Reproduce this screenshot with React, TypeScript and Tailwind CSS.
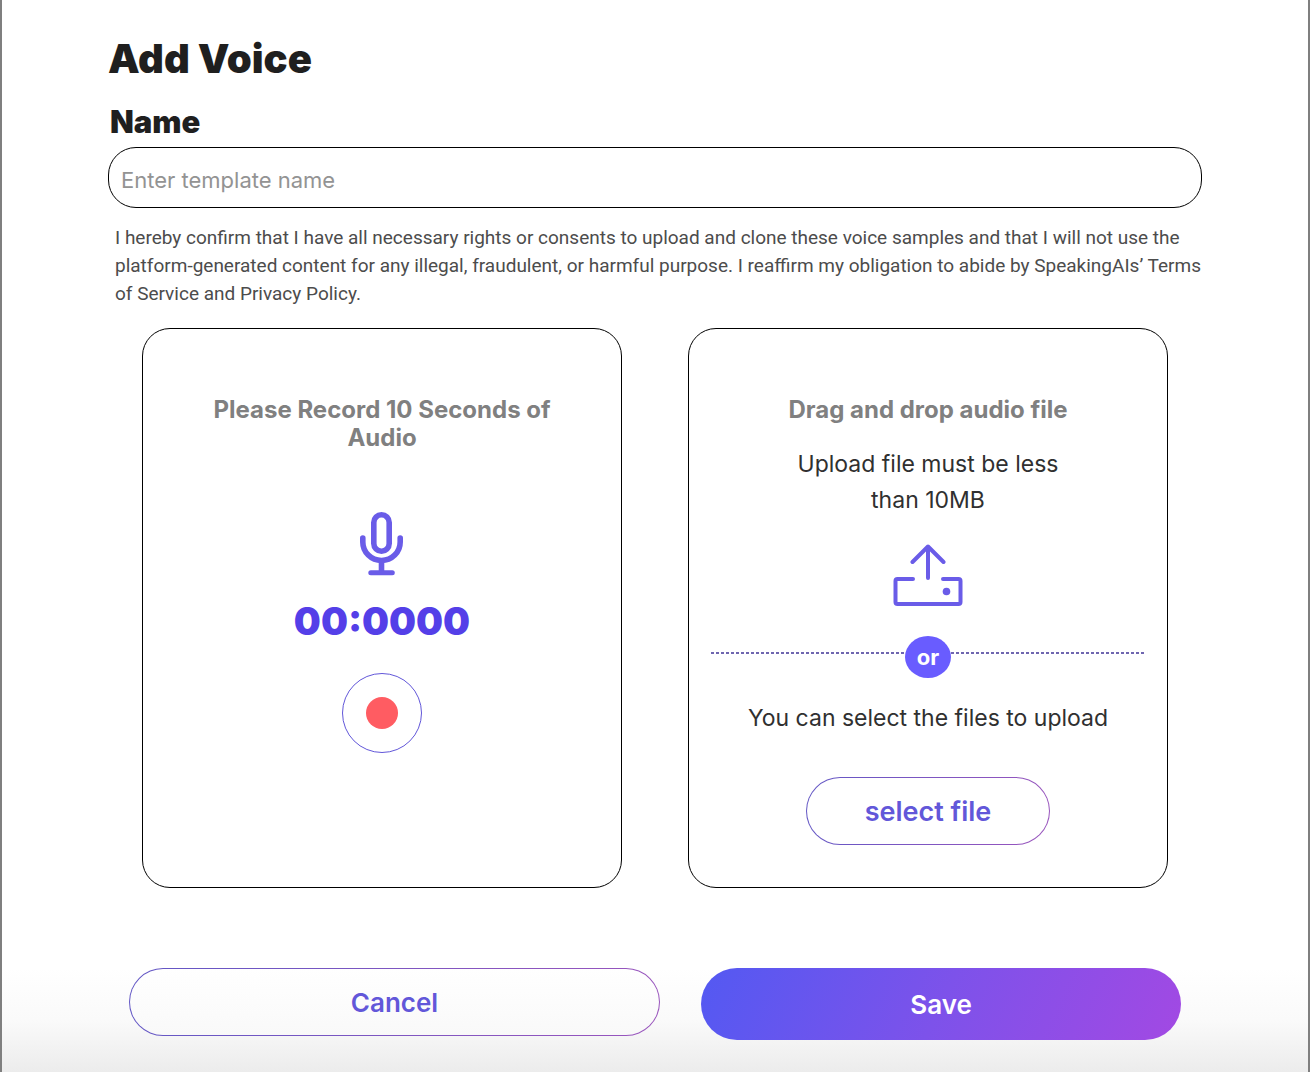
import { useState } from "react";

function MicIcon() {
  return (
    <svg width="44" height="64" viewBox="0 0 44 64" fill="none" stroke="#6a5ce8" strokeWidth="5.6" strokeLinecap="round" aria-hidden="true">
      <rect x="13.8" y="2.8" width="15.4" height="36.4" rx="7.7" />
      <path d="M2.8 26v4a18.7 18.5 0 0 0 37.4 0V26" />
      <path d="M21.500 50v10" />
      <path d="M10.800 60.800h21.500" strokeWidth="5" />
    </svg>
  );
}

function UploadIcon() {
  return (
    <svg width="70" height="62" viewBox="0 0 70 62" fill="none" stroke="#6a5ce8" strokeWidth="4" strokeLinecap="round" strokeLinejoin="round" aria-hidden="true">
      <path d="M35 34V2.5M19.5 18 35 2.5 50.5 18" />
      <path d="M20 35H4.5a2 2 0 0 0-2 2v21a2 2 0 0 0 2 2h61a2 2 0 0 0 2-2V37a2 2 0 0 0-2-2H50" />
      <circle cx="53.5" cy="47.5" r="3.8" fill="#6a5ce8" stroke="none" />
    </svg>
  );
}

function DashedLine() {
  return (
    <span className="mt-4 h-0.5 flex-1 bg-[repeating-linear-gradient(90deg,#6f66b0_0_3px,transparent_3px_5px)]" />
  );
}

export default function App() {
  const [name, setName] = useState("");

  return (
    <main className="min-h-screen bg-[#7f7f7f] px-0.5 font-['Inter',sans-serif]">
      <form className="flex min-h-screen flex-col bg-white" onSubmit={(e) => e.preventDefault()}>
        <div className="flex-1 px-[106px] pt-[33px]">
          <h1 className="text-[40px] leading-[52px] font-black text-[#1f1f1f]">Add Voice</h1>
          <label htmlFor="voice-name" className="mt-[19px] block pl-0.5 text-[31px] leading-9 font-black text-[#1f1f1f]">
            Name
          </label>
          <input
            id="voice-name"
            type="text"
            value={name}
            onChange={(e) => setName(e.target.value)}
            placeholder="Enter template name"
            className="mt-[7px] block h-[61px] w-full rounded-[28px] border border-black px-3 pt-1 text-[22px] text-[#1f1f1f] outline-none placeholder:text-[#939393]"
          />
          <p className="mt-4 pl-[7px] font-['Roboto',sans-serif] text-[19px] leading-7 text-[#4c4c4c]">
            I hereby confirm that I have all necessary rights or consents to upload and clone these voice samples and that I
            will not use the platform-generated content for any illegal, fraudulent, or harmful purpose. I reaffirm my
            obligation to abide by SpeakingAIs’ Terms of Service and Privacy Policy.
          </p>

          <div className="mt-5 grid grid-cols-2 gap-[66px] px-[34px]">
            <section className="flex h-[560px] flex-col items-center rounded-[28px] border border-black px-16 pt-[67px] text-center">
              <h2 className="text-2xl leading-7 font-bold text-[#808080]">Please Record 10 Seconds of Audio</h2>
              <div className="mt-[60px]">
                <MicIcon />
              </div>
              <p className="mt-[19px] text-[38px] leading-[52px] font-black text-[#543fe8]">00:0000</p>
              <button
                type="button"
                aria-label="Record"
                className="mt-[26px] flex size-20 items-center justify-center rounded-full border border-[#6257d9]"
              >
                <span className="size-8 rounded-full bg-[#ff5c62]" />
              </button>
            </section>

            <section className="flex h-[560px] flex-col items-center rounded-[28px] border border-black px-[22px] pt-[67px] text-center">
              <h2 className="text-2xl leading-7 font-bold text-[#808080]">Drag and drop audio file</h2>
              <p className="mt-[22px] w-[300px] text-[23px] leading-9 text-[#303030]">Upload file must be less than 10MB</p>
              <div className="mt-[26px]">
                <UploadIcon />
              </div>
              <div className="mt-[30px] flex w-full">
                <DashedLine />
                <span className="flex h-[42px] w-[46px] items-center justify-center rounded-[50%] bg-[#695cff] text-[22px] leading-none font-bold text-white">
                  or
                </span>
                <DashedLine />
              </div>
              <p className="mt-[22px] text-[23px] leading-9 text-[#303030]">You can select the files to upload</p>
              <button
                type="button"
                className="mt-[41px] h-[68px] w-[244px] rounded-[34px] border border-transparent pt-0.5 text-[27px] font-semibold text-[#6257d9] [background:linear-gradient(#fff,#fff)_padding-box,linear-gradient(100deg,#6257c5,#9a55bd)_border-box]"
              >
                select file
              </button>
            </section>
          </div>
        </div>

        <div className="mt-20 grid grid-cols-[531fr_480fr] items-start gap-[41px] bg-linear-to-b from-white via-[#fafafa] to-[#ececec] px-[127px] pb-8">
          <button
            type="button"
            className="h-[68px] rounded-[34px] border border-transparent text-[26px] font-semibold text-[#6257d9] [background:linear-gradient(#fff,#f9f9f9)_padding-box,linear-gradient(100deg,#6257c5,#9a55bd)_border-box]"
          >
            Cancel
          </button>
          <button
            type="submit"
            className="h-[72px] rounded-[36px] bg-[linear-gradient(115deg,#5359f2,#7d52ea_50%,#a249e3)] text-[26px] font-semibold text-white"
          >
            Save
          </button>
        </div>
      </form>
    </main>
  );
}
